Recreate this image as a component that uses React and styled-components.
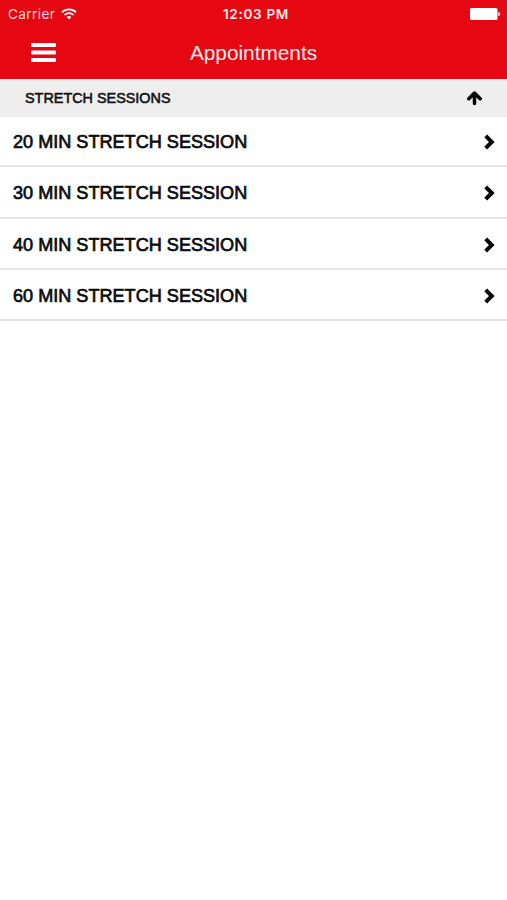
import styled, { createGlobalStyle } from "styled-components";

const GlobalStyle = createGlobalStyle`
  body {
    margin: 0;
    background: #fff;
    font-family: "Liberation Sans", Arial, sans-serif;
  }
`;

const Screen = styled.div`
  width: 100%;
  min-height: 900px;
  background: #fff;
`;

const Header = styled.header`
  height: 79px;
  background: #e50712;
  color: #fff;
`;

const StatusBar = styled.div`
  height: 27px;
  padding: 0 7px 0 8px;
  display: grid;
  grid-template-columns: 1fr auto 1fr;
  align-items: center;
  font-family: Inter, sans-serif;
  font-size: 13.6px;
`;

const Carrier = styled.div`
  display: flex;
  align-items: center;
  gap: 6px;
  letter-spacing: 0.4px;
  color: #ffd9dc;
`;

const Time = styled.div`
  padding-left: 4px;
  font-weight: 600;
  letter-spacing: 0.65px;
  color: #ffe9ea;
`;

const Battery = styled.div`
  display: flex;
  justify-content: flex-end;
`;

const NavBar = styled.div`
  height: 52px;
  padding: 0 31px;
  display: grid;
  grid-template-columns: 1fr auto 1fr;
  align-items: center;
`;

const MenuButton = styled.button`
  padding: 0 0 2px;
  border: none;
  background: none;
  display: flex;
  color: #fff;
`;

const Title = styled.h1`
  margin: 0;
  font-size: 20.8px;
  font-weight: 400;
  line-height: 52px;
  color: #ffeded;
`;

const SectionHeader = styled.div`
  height: 38px;
  padding: 0 25px;
  display: flex;
  align-items: center;
  justify-content: space-between;
  background: #eee;
  color: #111;
  font-size: 14.4px;
  -webkit-text-stroke: 0.55px #111;
`;

const List = styled.ul`
  margin: 0;
  padding: 0;
  list-style: none;
`;

const Row = styled.li`
  box-sizing: border-box;
  height: ${(props) => props.$height}px;
  padding: 2px 12px 0 13px;
  display: flex;
  align-items: center;
  justify-content: space-between;
  border-bottom: 2px solid #e5e5e5;
  color: #0c0c0c;
  font-size: 18.1px;
  -webkit-text-stroke: 0.7px #0c0c0c;
`;

const SessionName = styled.span`
  padding-top: 1px;
`;

const Icon = styled.svg`
  display: block;
  flex: none;
`;

const sessions = [
  { name: "20 MIN STRETCH SESSION", height: 50 },
  { name: "30 MIN STRETCH SESSION", height: 52 },
  { name: "40 MIN STRETCH SESSION", height: 51 },
  { name: "60 MIN STRETCH SESSION", height: 51 },
];

const WifiIcon = () => (
  <Icon width="16" height="12" viewBox="0 0 16 12" fill="none" stroke="#fff" strokeWidth="1.7">
    <path d="M0.9 4.4a10 10 0 0 1 14.2 0" />
    <path d="M3.5 7a6.3 6.3 0 0 1 9 0" />
    <path d="M8 11.4L5.7 9.1a3.3 3.3 0 0 1 4.6 0z" fill="#fff" stroke="none" />
  </Icon>
);

const BatteryIcon = () => (
  <Icon width="30" height="12" viewBox="0 0 30 12" fill="#fff">
    <rect x="0" y="0" width="27.5" height="12" rx="1.6" />
    <path d="M28.3 4v4c1.4-.4 1.7-1.1 1.7-2s-.3-1.6-1.7-2z" />
  </Icon>
);

const MenuIcon = () => (
  <Icon width="25" height="19" viewBox="0 0 25 19" fill="#fff">
    <rect x="0" y="0" width="25" height="4" rx="1.2" />
    <rect x="0" y="7.5" width="25" height="4" rx="1.2" />
    <rect x="0" y="15" width="25" height="4" rx="1.2" />
  </Icon>
);

const ArrowUpIcon = () => (
  <Icon width="15" height="15" viewBox="0 0 15 15" fill="none" stroke="#000" strokeWidth="3.5" strokeLinejoin="round" strokeLinecap="round">
    <path d="M1.8 7.7L7.5 2l5.7 5.7M7.5 2.5v10" />
  </Icon>
);

const ChevronIcon = () => (
  <Icon width="11" height="16" viewBox="0 0 11 16" fill="none" stroke="#000" strokeWidth="4">
    <path d="M1.7 1.9L7.8 8l-6.1 6.1" />
  </Icon>
);

const App = () => {
  return (
    <>
      <GlobalStyle />
      <Screen>
        <Header>
          <StatusBar>
            <Carrier>
              Carrier
              <WifiIcon />
            </Carrier>
            <Time>12:03 PM</Time>
            <Battery>
              <BatteryIcon />
            </Battery>
          </StatusBar>
          <NavBar>
            <MenuButton aria-label="Menu">
              <MenuIcon />
            </MenuButton>
            <Title>Appointments</Title>
          </NavBar>
        </Header>
        <SectionHeader>
          STRETCH SESSIONS
          <ArrowUpIcon />
        </SectionHeader>
        <List>
          {sessions.map((session) => (
            <Row key={session.name} $height={session.height}>
              <SessionName>{session.name}</SessionName>
              <ChevronIcon />
            </Row>
          ))}
        </List>
      </Screen>
    </>
  );
};

export default App;
